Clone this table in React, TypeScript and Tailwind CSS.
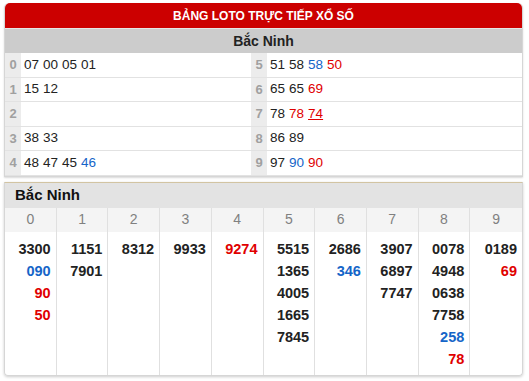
const loto: { d: string; nums: { v: string; c?: "blue" | "red"; u?: boolean }[] }[] = [
  { d: "0", nums: [{ v: "07" }, { v: "00" }, { v: "05" }, { v: "01" }] },
  { d: "5", nums: [{ v: "51" }, { v: "58" }, { v: "58", c: "blue" }, { v: "50", c: "red" }] },
  { d: "1", nums: [{ v: "15" }, { v: "12" }] },
  { d: "6", nums: [{ v: "65" }, { v: "65" }, { v: "69", c: "red" }] },
  { d: "2", nums: [] },
  { d: "7", nums: [{ v: "78" }, { v: "78", c: "red" }, { v: "74", c: "red", u: true }] },
  { d: "3", nums: [{ v: "38" }, { v: "33" }] },
  { d: "8", nums: [{ v: "86" }, { v: "89" }] },
  { d: "4", nums: [{ v: "48" }, { v: "47" }, { v: "45" }, { v: "46", c: "blue" }] },
  { d: "9", nums: [{ v: "97" }, { v: "90", c: "blue" }, { v: "90", c: "red" }] },
];

// each column of the "đầu / đuôi" table
const cols: { v: string; c?: "blue" | "red" }[][] = [
  [{ v: "3300" }, { v: "090", c: "blue" }, { v: "90", c: "red" }, { v: "50", c: "red" }],
  [{ v: "1151" }, { v: "7901" }],
  [{ v: "8312" }],
  [{ v: "9933" }],
  [{ v: "9274", c: "red" }],
  [{ v: "5515" }, { v: "1365" }, { v: "4005" }, { v: "1665" }, { v: "7845" }],
  [{ v: "2686" }, { v: "346", c: "blue" }],
  [{ v: "3907" }, { v: "6897" }, { v: "7747" }],
  [{ v: "0078" }, { v: "4948" }, { v: "0638" }, { v: "7758" }, { v: "258", c: "blue" }, { v: "78", c: "red" }],
  [{ v: "0189" }, { v: "69", c: "red" }],
];

const colorOf = (c?: string) =>
  c === "blue" ? "text-[#1565c8]" : c === "red" ? "text-[#e00000]" : "text-[#222]";

export default function App() {
  return (
    <div className="w-[529px] h-[381px] bg-white px-[4px] pt-[3px] font-['Liberation_Sans',Arial,sans-serif]">
      {/* top table */}
      <div className="w-[519px] border border-[#d6d6d6] border-t-0 rounded-t-[5px] shadow-[0_1px_2px_rgba(0,0,0,0.15)]">
        <div className="h-[25px] bg-[#cc0000] rounded-t-[5px] flex items-center justify-center text-white font-bold text-[12px]">
          BẢNG LOTO TRỰC TIẾP XỔ SỐ
        </div>
        <div className="h-[25px] bg-[#cccccc] border-t border-[#e6e6e6] flex items-center justify-center font-bold text-[14px] text-[#222]">
          Bắc Ninh
        </div>
        <div className="grid grid-cols-[246px_1fr]">
          {loto.map((r, i) => (
            <div key={i} className="h-[24.6px] flex border-b border-[#e2e2e2]">
              <div className="w-[16px] bg-[#ececec] flex items-center justify-center text-[#a0a0a0] font-bold text-[13px]">
                {r.d}
              </div>
              <div className="flex-1 flex items-center gap-[4px] pl-[3px] text-[13.5px] text-[#1a1a1a]">
                {r.nums.map((n, j) => (
                  <span key={j} className={`${colorOf(n.c)} ${n.u ? "underline" : ""}`}>
                    {n.v}
                  </span>
                ))}
              </div>
            </div>
          ))}
        </div>
      </div>

      {/* bottom table */}
      <div className="mt-[5px] w-[519px] border border-[#d6d6d6] border-t-[#d2c4a2] rounded-b-[4px] shadow-[0_1px_3px_rgba(0,0,0,0.2)]">
        <div className="h-[25px] bg-[#e3e3e3] flex items-center pl-[10px] font-bold text-[15px] text-[#111]">
          Bắc Ninh
        </div>
        <div className="grid grid-cols-10">
          {cols.map((col, i) => (
            <div key={i} className={`flex flex-col ${i < 9 ? "border-r border-[#e0e0e0]" : ""}`}>
              <div className="h-[24px] bg-[#f4f4f4] flex items-center justify-center text-[14px] text-[#808080]">
                {i}
              </div>
              <div className="h-[143px] pt-[6px] pr-[5px] flex flex-col items-end">
                {col.map((n, j) => (
                  <span key={j} className={`h-[22px] leading-[22px] font-bold text-[14.5px] ${colorOf(n.c)}`}>
                    {n.v}
                  </span>
                ))}
              </div>
            </div>
          ))}
        </div>
      </div>
    </div>
  );
}
